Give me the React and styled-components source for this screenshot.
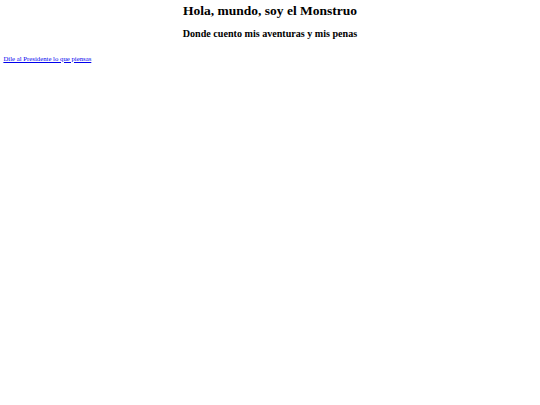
import React from 'react';
import styled, { createGlobalStyle } from 'styled-components';

const GlobalStyle = createGlobalStyle`
  body {
    margin: 0;
    padding: 3.4px;
    background: #ffffff;
    font-family: "Liberation Serif", "Times New Roman", serif;
    color: #000000;
  }
`;

const Header = styled.header`
  text-align: center;
  padding-bottom: 8.4px;
`;

const Title = styled.h1`
  font-size: 13.5px;
  font-weight: bold;
  margin: 0 0 8.4px;
`;

const Subtitle = styled.h2`
  font-size: 10.1px;
  font-weight: bold;
  margin: 0;
`;

const Links = styled.p`
  margin: 7.6px 0 0;
  font-size: 6.75px;
`;

const Link = styled.a`
  color: #0000ee;
  text-decoration: underline;
`;

const App = () => (
  <>
    <GlobalStyle />
    <Header>
      <Title>Hola, mundo, soy el Monstruo</Title>
      <Subtitle>Donde cuento mis aventuras y mis penas</Subtitle>
    </Header>
    <Links>
      <Link href="#">Dile al Presidente lo que piensas</Link>
    </Links>
  </>
);

export default App;
